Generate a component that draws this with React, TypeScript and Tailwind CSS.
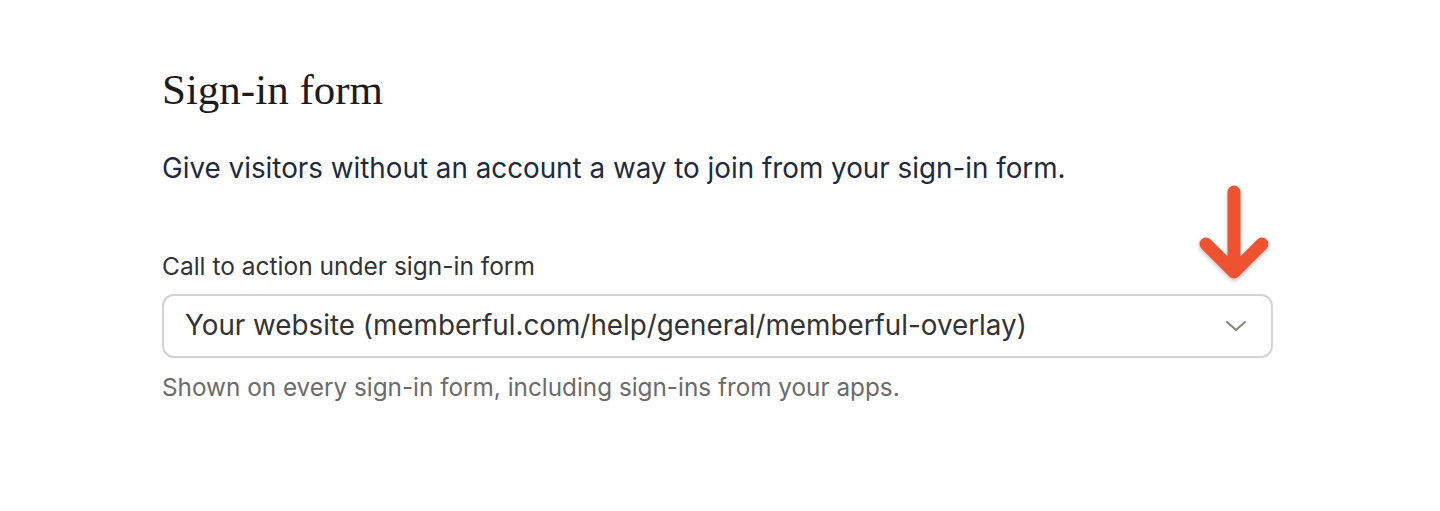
export default function App() {
  return (
    <div className="min-h-[511px] w-full bg-white font-['Inter','Noto_Sans',sans-serif]">
      <div className="pl-[162px] pt-[66px] w-[1273px]">
        <h1 className="font-['Liberation_Serif',serif] text-[43px] leading-[48px] text-[#1c1c1c]">
          Sign-in form
        </h1>
        <p className="mt-[37px] text-[27.8px] leading-[34px] text-[#1f2a3d]">
          Give visitors without an account a way to join from your sign-in form.
        </p>
        <div className="mt-[66px]">
          <label className="block pb-[13px] text-[24.5px] leading-[30px] text-[#333]">
            Call to action under sign-in form
          </label>
          <div className="relative">
            <div className="flex h-[64px] items-center justify-between rounded-[12px] border-2 border-[#d3d3d3] bg-white pl-[21px] pr-[24px]">
              <span className="text-[27.8px] text-[#333]">
                Your website (memberful.com/help/general/memberful-overlay)
              </span>
              <svg width="22" height="14" viewBox="0 0 22 14" fill="none">
                <path d="M2 3l9 8 9-8" stroke="#8a8580" strokeWidth="2" strokeLinecap="round" strokeLinejoin="round" />
              </svg>
            </div>
            <svg
              className="absolute right-[-1px] top-[-110px] drop-shadow-[0_2px_2px_rgba(0,0,0,0.25)]"
              width="80"
              height="100"
              viewBox="0 0 80 100"
              fill="none"
            >
              <path
                d="M40 8v80M12 60l28 28 28-28"
                stroke="#ee5230"
                strokeWidth="13"
                strokeLinecap="round"
                strokeLinejoin="round"
              />
            </svg>
          </div>
          <p className="mt-[14px] text-[24.3px] leading-[30px] text-[#6b6b6b]">
            Shown on every sign-in form, including sign-ins from your apps.
          </p>
        </div>
      </div>
    </div>
  )
}
